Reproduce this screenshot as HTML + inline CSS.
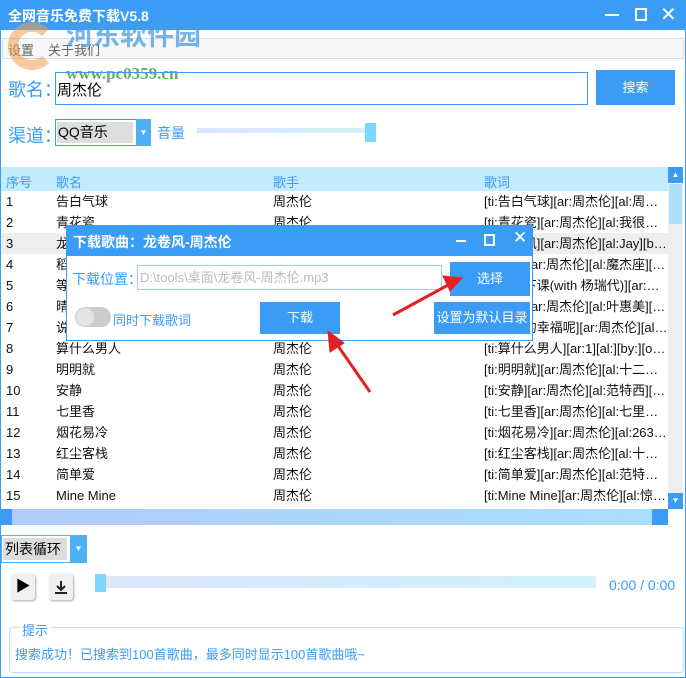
<!DOCTYPE html>
<html><head><meta charset="utf-8"><style>
*{margin:0;padding:0;box-sizing:border-box}
body{width:686px;height:678px;overflow:hidden;background:#fff;font-family:"Liberation Sans","Noto Sans CJK SC",sans-serif;font-size:13px;position:relative}
.a{position:absolute;white-space:nowrap}
.win{left:0;top:0;width:686px;height:678px;border:1px solid #3a9cf5}
.tb{left:0;top:0;width:686px;height:30px;background:#3a9cf5;color:#fff}
.btn{background:#3a9cf5;color:#fff;text-align:center}
.row{left:1px;width:667px;height:21px;line-height:21px;color:#111}
.row span{position:absolute;white-space:nowrap;overflow:hidden;text-overflow:ellipsis}
.lbl{color:#3a9cf5}
</style></head><body>
<div class="a win"></div>
<div class="a tb"><span class="a" style="left:8px;top:6px;font-size:14px;font-weight:bold">全网音乐免费下载V5.8</span>
<span class="a" style="left:605px;top:14px;width:14px;height:2px;background:#fff"></span>
<span class="a" style="left:635px;top:8px;width:12px;height:13px;border:2px solid #fff"></span>
<span class="a" style="left:660px;top:2px;font-size:20px">✕</span></div>
<div class="a" style="left:2px;top:38px;width:682px;height:21px;border:1px solid #ddd;background:#f7f7f7"></div>
<span class="a" style="left:8px;top:40px;color:#666">设置</span><span class="a" style="left:48px;top:40px;color:#666">关于我们</span>
<div class="a" style="left:8px;top:22px;width:48px;height:48px;border-radius:50%;border:10px solid #f0a050;opacity:.55;border-right-color:transparent"></div>
<span class="a" style="left:66px;top:14px;font-size:27px;font-weight:bold;color:#4a9be0;opacity:.75">河东软件园</span>
<span class="a" style="left:66px;top:64px;font-size:17px;font-weight:bold;color:#4aa24a;font-family:'Liberation Serif',serif;opacity:.85">www.pc0359.cn</span>
<span class="a lbl" style="left:8px;top:76px;font-size:18px">歌名：</span>
<div class="a" style="left:55px;top:72px;width:533px;height:33px;border:1px solid #3a9cf5"></div>
<span class="a" style="left:57px;top:79px;font-size:15px">周杰伦</span>
<div class="a btn" style="left:596px;top:70px;width:79px;height:35px;line-height:35px;font-size:13px">搜索</div>
<span class="a lbl" style="left:8px;top:122px;font-size:18px">渠道：</span>
<div class="a" style="left:55px;top:119px;width:96px;height:27px;border:1px solid #3a9cf5"></div>
<div class="a" style="left:57px;top:122px;width:76px;height:21px;background:#ddd;font-size:14px;line-height:21px;padding-left:1px">QQ音乐</div>
<div class="a" style="left:136px;top:119px;width:15px;height:27px;background:#4fb0f8;color:#fff;font-size:8px;line-height:27px;text-align:center">▼</div>
<span class="a lbl" style="left:157px;top:123px;font-size:14px">音量</span>
<div class="a" style="left:197px;top:128px;width:170px;height:5px;background:linear-gradient(90deg,#dbe6fa,#d3f1fd)"></div>
<div class="a" style="left:365px;top:123px;width:11px;height:19px;background:#7dd6fd"></div>
<div class="a" style="left:1px;top:167px;width:667px;height:24px;background:#c2ebfd"></div>
<span class="a lbl" style="left:6px;top:172px">序号</span><span class="a lbl" style="left:56px;top:172px">歌名</span><span class="a lbl" style="left:273px;top:172px">歌手</span><span class="a lbl" style="left:484px;top:172px">歌词</span>
<div class="a" style="left:668px;top:167px;width:15px;height:342px;background:#eee"></div>
<div class="a" style="left:668px;top:167px;width:15px;height:16px;background:#3a9cf5;color:#fff;font-size:8px;text-align:center;line-height:16px">▲</div>
<div class="a" style="left:669px;top:184px;width:13px;height:40px;background:#aee0fb"></div>
<div class="a" style="left:668px;top:493px;width:15px;height:16px;background:#3a9cf5;color:#fff;font-size:8px;text-align:center;line-height:16px">▼</div>
<div class="a" style="left:1px;top:509px;width:667px;height:16px;background:linear-gradient(90deg,#b0cbfa,#a8e0fd)"></div>
<div class="a" style="left:1px;top:509px;width:11px;height:16px;background:#3a9cf5"></div>
<div class="a" style="left:652px;top:509px;width:16px;height:16px;background:#3a9cf5"></div>
<div class="a" style="left:1px;top:233px;width:667px;height:21px;background:#eee"></div>
<div id="rows"></div>
<script>
var d=[["告白气球","[ti:告白气球][ar:周杰伦][al:周杰伦..."],["青花瓷","[ti:青花瓷][ar:周杰伦][al:我很忙][..."],["龙卷风","[ti:龙卷风][ar:周杰伦][al:Jay][by:..."],["稻香","[ti:稻香][ar:周杰伦][al:魔杰座][by:..."],["等你下课","[ti:等你下课(with 杨瑞代)][ar:周杰..."],["晴天","[ti:晴天][ar:周杰伦][al:叶惠美][by:..."],["说好的幸福呢","[ti:说好的幸福呢][ar:周杰伦][al:闪..."],["算什么男人","[ti:算什么男人][ar:1][al:][by:][offs..."],["明明就","[ti:明明就][ar:周杰伦][al:十二新作..."],["安静","[ti:安静][ar:周杰伦][al:范特西][by:..."],["七里香","[ti:七里香][ar:周杰伦][al:七里香][..."],["烟花易冷","[ti:烟花易冷][ar:周杰伦][al:26328..."],["红尘客栈","[ti:红尘客栈][ar:周杰伦][al:十二新..."],["简单爱","[ti:简单爱][ar:周杰伦][al:范特西][..."],["Mine Mine","[ti:Mine Mine][ar:周杰伦][al:惊叹..."]];
var h="";d.forEach(function(r,i){h+='<div class="a row" style="top:'+(191+i*21)+'px"><span style="left:5px">'+(i+1)+'</span><span style="left:55px">'+r[0]+'</span><span style="left:272px">周杰伦</span><span style="left:483px;width:184px">'+r[1]+'</span></div>'});document.getElementById("rows").innerHTML=h;
</script>
<div class="a" style="left:66px;top:225px;width:467px;height:116px;background:#fff;border:1px solid #3a9cf5"></div>
<div class="a" style="left:66px;top:225px;width:467px;height:31px;background:#3a9cf5;color:#fff">
<span class="a" style="left:7px;top:7px;font-size:14px;font-weight:bold">下载歌曲：龙卷风-周杰伦</span>
<span class="a" style="left:390px;top:15px;width:10px;height:2px;background:#fff"></span>
<span class="a" style="left:418px;top:9px;width:11px;height:12px;border:2px solid #fff"></span>
<span class="a" style="left:447px;top:3px;font-size:17px">✕</span></div>
<span class="a lbl" style="left:72px;top:269px;font-size:14px">下载位置：</span>
<div class="a" style="left:137px;top:265px;width:305px;height:25px;border:1px solid #9cd0f8;color:#bbb;line-height:23px;padding-left:2px">D:\tools\桌面\龙卷风-周杰伦.mp3</div>
<div class="a btn" style="left:450px;top:262px;width:80px;height:34px;line-height:34px">选择</div>
<div class="a" style="left:75px;top:307px;width:36px;height:20px;border-radius:10px;background:#ccc"></div>
<div class="a" style="left:76px;top:308px;width:18px;height:18px;border-radius:9px;background:#e4e4e4"></div>
<span class="a lbl" style="left:113px;top:310px">同时下载歌词</span>
<div class="a btn" style="left:260px;top:302px;width:80px;height:32px;line-height:32px">下载</div>
<div class="a btn" style="left:434px;top:302px;width:96px;height:32px;line-height:32px">设置为默认目录</div>
<svg class="a" style="left:0;top:0" width="686" height="678"><g fill="#e52020" stroke="#e52020" stroke-width="3">
<line x1="393" y1="315" x2="450" y2="284"/><polygon points="462,278 443,276 450,291" stroke-width="1"/>
<line x1="370" y1="392" x2="336" y2="343"/><polygon points="328,331 330,352 344,343" stroke-width="1"/></g></svg>
<div class="a" style="left:1px;top:535px;width:86px;height:28px;border:1px solid #4fb0f8"></div>
<div class="a" style="left:3px;top:538px;width:64px;height:22px;background:#ddd;font-size:14px;line-height:22px;padding-left:2px">列表循环</div>
<div class="a" style="left:70px;top:535px;width:17px;height:28px;background:#4fb0f8;color:#fff;font-size:8px;line-height:28px;text-align:center">▼</div>
<div class="a" style="left:11px;top:574px;width:24px;height:26px;background:#f0f0f0;box-shadow:1px 1px 2px #aaa;border-radius:3px;font-size:15px;text-align:center;line-height:26px">▶</div>
<div class="a" style="left:49px;top:574px;width:24px;height:26px;background:#f0f0f0;box-shadow:1px 1px 2px #aaa;border-radius:3px"></div>
<svg class="a" style="left:49px;top:574px" width="24" height="26"><path d="M12 7v9M8 12l4 4 4-4M6 19h12" stroke="#222" stroke-width="2" fill="none"/></svg>
<div class="a" style="left:95px;top:576px;width:501px;height:12px;background:linear-gradient(90deg,#dbe6fa,#d3f1fd)"></div>
<div class="a" style="left:95px;top:574px;width:11px;height:18px;background:#7dd6fd"></div>
<span class="a lbl" style="left:609px;top:577px;font-size:14px">0:00 / 0:00</span>
<div class="a" style="left:9px;top:627px;width:675px;height:46px;border:1px solid #b8e0fa;border-radius:4px"></div>
<span class="a lbl" style="left:18px;top:620px;background:#fff;padding:0 4px">提示</span>
<span class="a lbl" style="left:15px;top:644px">搜索成功！已搜索到100首歌曲，最多同时显示100首歌曲哦~</span>
</body></html>
